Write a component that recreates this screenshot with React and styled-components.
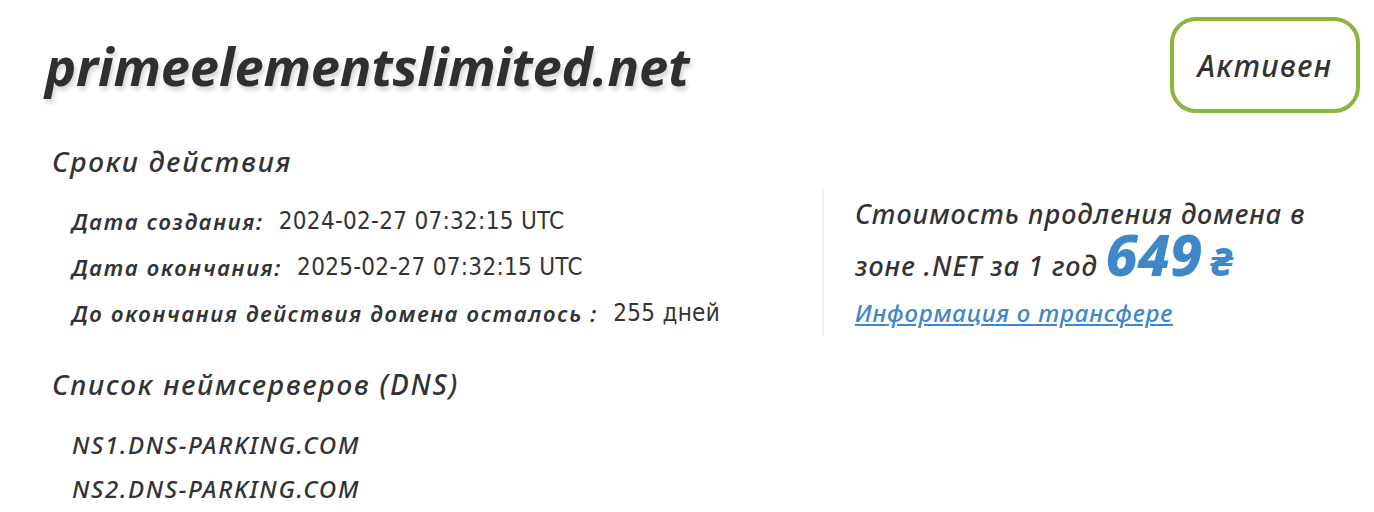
import styled, { createGlobalStyle } from 'styled-components';

const GlobalStyle = createGlobalStyle`
  body {
    margin: 0;
    background: #fff;
    font-family: "Noto Sans", "DejaVu Sans", sans-serif;
    color: #333;
  }
`;

const Page = styled.div`
  padding: 17px 14px 0 45px;
`;

const Header = styled.div`
  display: flex;
  justify-content: space-between;
  align-items: center;
`;

const Domain = styled.h1`
  margin: 0;
  font-size: 52.5px;
  font-style: italic;
  font-weight: 700;
  letter-spacing: -0.2px;
  color: #2f2f2f;
  text-shadow: 2px 4px 4px rgba(0, 0, 0, 0.16);
`;

const Badge = styled.div`
  box-sizing: border-box;
  width: 190px;
  height: 96px;
  border: 4px solid #8cb641;
  border-radius: 26px;
  display: flex;
  align-items: center;
  justify-content: center;
  font-size: 30px;
  letter-spacing: 1.4px;
  font-style: italic;
  font-weight: 500;
  color: #333;
`;

const SectionTitle = styled.h2`
  margin: ${p => p.$top}px 0 0 7px;
  font-size: 28px;
  line-height: 32px;
  letter-spacing: 1.8px;
  font-style: italic;
  font-weight: 500;
  color: #333;
`;

const Details = styled.div`
  display: grid;
  grid-template-columns: 777px 1fr;
  margin-top: 12px;
`;

const Rows = styled.div`
  padding: 9px 0 0 27px;
`;

const Row = styled.div`
  display: flex;
  align-items: center;
  height: 46px;
`;

const Label = styled.span`
  font-size: 22px;
  letter-spacing: 1.75px;
  font-style: italic;
  font-weight: 600;
  margin-right: 15px;
`;

const Value = styled.span`
  font-family: "DejaVu Sans Condensed", "DejaVu Sans", sans-serif;
  font-size: 24px;
  letter-spacing: 0.3px;
  color: #333;
`;

const Price = styled.div`
  border-left: 2px solid #f0f0f0;
  padding: 0 0 0 31px;
  font-size: 27px;
  letter-spacing: 1px;
  font-style: italic;
  font-weight: 500;
`;

const PriceLine = styled.div`
  height: 49px;
  line-height: 49px;
  margin-top: ${p => p.$shift || 0}px;
  white-space: nowrap;
`;

const Amount = styled.span`
  font-size: 57px;
  line-height: 40px;
  font-weight: 800;
  color: #3f88c7;
  letter-spacing: 0;
`;

const Currency = styled.span`
  font-size: 40px;
  line-height: 30px;
  font-weight: 800;
  color: #3f88c7;
  margin-left: 8px;
`;

const TransferLink = styled.a`
  display: block;
  margin-top: 15px;
  font-size: 24px;
  letter-spacing: 0.8px;
  line-height: 30px;
  color: #3f88c7;
  text-decoration: underline;
`;

const NsList = styled.div`
  padding: 22px 0 0 27px;
`;

const Ns = styled.div`
  height: 44px;
  display: flex;
  align-items: center;
  font-size: 24px;
  letter-spacing: 1.7px;
  font-style: italic;
  font-weight: 500;
  color: #333;
`;

const dates = [
  ['Дата создания:', '2024-02-27 07:32:15 UTC'],
  ['Дата окончания:', '2025-02-27 07:32:15 UTC'],
  ['До окончания действия домена осталось :', '255 дней'],
];

const App = () => {
  return (
    <Page>
      <GlobalStyle />
      <Header>
        <Domain>primeelementslimited.net</Domain>
        <Badge>Активен</Badge>
      </Header>
      <SectionTitle $top={32}>Сроки действия</SectionTitle>
      <Details>
        <Rows>
          {dates.map(([label, value]) => (
            <Row key={label}>
              <Label>{label}</Label>
              <Value>{value}</Value>
            </Row>
          ))}
        </Rows>
        <Price>
          <PriceLine>Стоимость продления домена в</PriceLine>
          <PriceLine $shift={-4}>
            зоне .NET за 1 год <Amount>649</Amount><Currency>₴</Currency>
          </PriceLine>
          <TransferLink href="#">Информация о трансфере</TransferLink>
        </Price>
      </Details>
      <SectionTitle $top={32}>Список неймсерверов (DNS)</SectionTitle>
      <NsList>
        <Ns>NS1.DNS-PARKING.COM</Ns>
        <Ns>NS2.DNS-PARKING.COM</Ns>
      </NsList>
    </Page>
  );
};

export default App;
